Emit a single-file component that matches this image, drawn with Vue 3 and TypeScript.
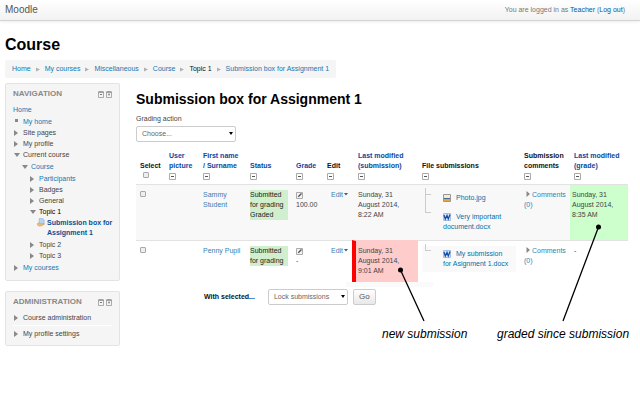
<script setup lang="ts">
import { ref } from 'vue'

interface Column {
  key: string
  lines: string[]
  width: number
  sortable?: boolean
}

const crumbs = ['Home', 'My courses', 'Miscellaneous', 'Course', 'Topic 1', 'Submission box for Assignment 1']

const columns: Column[] = [
  { key: 'select', lines: ['Select'], width: 29 },
  { key: 'picture', lines: ['User', 'picture'], width: 34, sortable: true },
  { key: 'name', lines: ['First name', '/ Surname'], width: 47, sortable: true },
  { key: 'status', lines: ['Status'], width: 46, sortable: true },
  { key: 'grade', lines: ['Grade'], width: 31, sortable: true },
  { key: 'edit', lines: ['Edit'], width: 29 },
  { key: 'modified', lines: ['Last modified', '(submission)'], width: 66, sortable: true },
  { key: 'files', lines: ['File submissions'], width: 102 },
  { key: 'comments', lines: ['Submission', 'comments'], width: 50 },
  { key: 'graded', lines: ['Last modified', '(grade)'], width: 58, sortable: true },
]

const rows = [
  {
    name: ['Sammy', 'Student'],
    status: ['Submitted', 'for grading', 'Graded'],
    grade: '100.00',
    modified: ['Sunday, 31', 'August 2014,', '8:22 AM'],
    isNew: false,
    files: [
      { kind: 'image', lines: ['Photo.jpg'] },
      { kind: 'word', lines: ['Very important', 'document.docx'] },
    ],
    graded: ['Sunday, 31', 'August 2014,', '8:35 AM'],
  },
  {
    name: ['Penny Pupil'],
    status: ['Submitted', 'for grading'],
    grade: '-',
    modified: ['Sunday, 31', 'August 2014,', '9:01 AM'],
    isNew: true,
    files: [{ kind: 'word', lines: ['My submission', 'for Asignment 1.docx'] }],
    graded: null,
  },
]

const action = ref('Choose...')
const bulk = ref('Lock submissions')
</script>

<template>
  <div class="page">
    <header class="navbar">
      <a class="brand" href="#">Moodle</a>
      <p class="login">You are logged in as <a href="#">Teacher</a> (<a href="#">Log out</a>)</p>
    </header>

    <div class="body">
      <h1>Course</h1>
      <nav class="crumbs">
        <template v-for="(c, i) in crumbs" :key="c">
          <svg v-if="i > 0" class="sep" viewBox="0 0 5 5"><path d="M0 0L5 2.5L0 5Z" /></svg>
          <span v-if="c === 'Topic 1'" class="plain">{{ c }}</span>
          <a v-else href="#">{{ c }}</a>
        </template>
      </nav>

      <div class="columns">
        <aside>
          <section class="block navigation">
            <div class="block-head">
              <h2>NAVIGATION</h2>
              <svg class="tools" viewBox="0 0 14 7"><path d="M.5 1v5.5h5V1zM8.500 1v5.500h5V1z" class="frame" /><path d="M.5 1h5M8.500 1h5" class="cap" /><path d="M2 3.500h2M11 2.500v2M10.500 3.500h1" class="mark" /></svg>
            </div>
            <a class="row" href="#">Home</a>
            <ul class="root">
              <li><a class="row dot" href="#">My home</a></li>
              <li><span class="row closed">Site pages</span></li>
              <li><span class="row closed">My profile</span></li>
              <li>
                <span class="row open">Current course</span>
                <ul>
                  <li>
                    <a class="row open" href="#">Course</a>
                    <ul>
                      <li><a class="row closed" href="#">Participants</a></li>
                      <li><span class="row closed">Badges</span></li>
                      <li><span class="row closed">General</span></li>
                      <li>
                        <span class="row open current">Topic 1</span>
                        <ul class="leaf">
                          <li>
                            <svg class="hand" viewBox="0 0 9 10"><path d="M2.500 .5h4l1.500 1.500v5h-5.500z" fill="#b9d4ec" stroke="#7fa9d4" stroke-width=".6" /><path d="M.5 6q1.500-1.200 3 0l1.500.7 2.500-.5q1.200.2.3 1l-3 1.800H2L.5 8z" fill="#eebb78" stroke="#cf9248" stroke-width=".5" /></svg>
                            <a href="#">Submission box for<br>Assignment 1</a>
                          </li>
                        </ul>
                      </li>
                      <li><span class="row closed">Topic 2</span></li>
                      <li><span class="row closed">Topic 3</span></li>
                    </ul>
                  </li>
                </ul>
              </li>
              <li><a class="row closed" href="#">My courses</a></li>
            </ul>
          </section>

          <section class="block admin">
            <div class="block-head">
              <h2>ADMINISTRATION</h2>
              <svg class="tools" viewBox="0 0 14 7"><path d="M.5 1v5.5h5V1zM8.500 1v5.500h5V1z" class="frame" /><path d="M.5 1h5M8.500 1h5" class="cap" /><path d="M2 3.500h2M11 2.500v2M10.500 3.500h1" class="mark" /></svg>
            </div>
            <ul class="root">
              <li><span class="row closed">Course administration</span></li>
              <li class="ruled"><span class="row closed">My profile settings</span></li>
            </ul>
          </section>
        </aside>

        <main>
          <h2 class="title">Submission box for Assignment 1</h2>
          <label class="caption" for="action">Grading action</label>
          <div class="picker wide">
            <select id="action" v-model="action"><option>Choose...</option></select>
            <svg viewBox="0 0 4 3"><path d="M0 0h4L2 3z" /></svg>
          </div>

          <table>
            <colgroup><col v-for="c in columns" :key="c.key" :style="{ width: c.width + 'px' }"></colgroup>
            <thead>
              <tr>
                <th v-for="c in columns" :key="c.key" :class="c.key">
                  <component :is="c.sortable ? 'a' : 'span'" :href="c.sortable ? '#' : undefined">
                    <span v-for="l in c.lines" :key="l" class="line">{{ l }}</span>
                  </component>
                  <input v-if="c.key === 'select'" type="checkbox" aria-label="Select all">
                  <svg v-else class="minus" viewBox="0 0 7 7"><path d="M.5.5h6v6h-6z" fill="#fff" stroke="#aaa" /><path d="M2 3.500h3" stroke="#555" /></svg>
                </th>
              </tr>
            </thead>
            <tbody>
              <tr v-for="r in rows" :key="r.grade">
                <td class="select"><input type="checkbox" :aria-label="'Select ' + r.name.join(' ')"></td>
                <td></td>
                <td class="name"><a href="#"><span v-for="l in r.name" :key="l" class="line">{{ l }}</span></a></td>
                <td class="status"><div class="badge"><span v-for="l in r.status" :key="l" class="line">{{ l }}</span></div></td>
                <td class="grade">
                  <a href="#" aria-label="Grade" class="pencil"><svg viewBox="0 0 7 7"><path d="M.5.5h6v6h-6z" fill="#f4f4f4" stroke="#aaa" /><path d="M1.800 5.200L2.300 3.700 5 1l1 1-2.700 2.700z" fill="#555" /></svg></a>
                  <span class="line">{{ r.grade }}</span>
                </td>
                <td class="edit"><a href="#">Edit<svg class="caret" viewBox="0 0 4 3"><path d="M0 0h4L2 2.500z" /></svg></a></td>
                <td :class="['modified', { fresh: r.isNew }]"><span v-for="l in r.modified" :key="l" class="line">{{ l }}</span></td>
                <td class="files">
                  <ul :class="['tree', { shaded: r.isNew }]">
                    <li v-for="f in r.files" :key="f.lines[0]">
                      <a href="#">
                        <svg v-if="f.kind === 'image'" class="file" viewBox="0 0 8 8"><path d="M.5.5h7v7h-7z" fill="#f4ebd0" stroke="#999" /><path d="M1 4h6v1.500H1z" fill="#4b6a92" /><path d="M1 5.500h6V7H1z" fill="#e7a63d" /></svg>
                        <svg v-else class="file" viewBox="0 0 8 8"><path d="M.5.5h7v7h-7z" fill="#dce8f8" stroke="#a8bfdf" /><path d="M1 2l1.300 4L4 2.500 5.300 6 7 1.500" fill="none" stroke="#174fa8" stroke-width="1.300" /></svg>
                        <template v-for="(l, i) in f.lines" :key="l"><br v-if="i > 0">{{ l }}</template>
                      </a>
                    </li>
                  </ul>
                </td>
                <td class="comments"><a href="#"><svg class="tri" viewBox="0 0 4 6"><path d="M.5 0L4 3L.5 6z" /></svg>Comments<br><span class="count">(0)</span></a></td>
                <td :class="['graded', { done: r.graded }]"><span v-for="l in r.graded ?? ['-']" :key="l" class="line">{{ l }}</span></td>
              </tr>
            </tbody>
          </table>

          <form class="bulk" @submit.prevent>
            <label for="bulk">With selected...</label>
            <div class="picker">
              <select id="bulk" v-model="bulk"><option>Lock submissions</option></select>
              <svg viewBox="0 0 4 3"><path d="M0 0h4L2 3z" /></svg>
            </div>
            <button type="submit">Go</button>
          </form>

          <div class="notes">
            <svg viewBox="0 0 492 266">
              <rect x="210" y="199" width="87" height="5" fill="#fafafa" />
              <path d="M264.500 187L288 238M462.500 144L427 238" />
              <circle cx="264.500" cy="187" r="2.500" /><circle cx="462.500" cy="144" r="2.500" />
            </svg>
            <p class="note-new">new submission</p>
            <p class="note-graded">graded since submission</p>
          </div>
        </main>
      </div>
    </div>
  </div>
</template>

<style>
body {
  margin: 0;
  background: #fff;
}
</style>

<style scoped>
.page {
  font: 7px/10px "Liberation Sans", Arial, sans-serif;
  color: #444;
}
h1, h2, p, ul {
  margin: 0;
  padding: 0;
}
ul {
  list-style: none;
}
a {
  color: #1478b0;
  text-decoration: none;
}
.navbar {
  display: flex;
  justify-content: space-between;
  align-items: center;
  height: 20px;
  padding: 0 15px 0 5px;
  border-bottom: 1px solid #d4d4d4;
  background: linear-gradient(#fff, #f2f2f2);
  box-shadow: 0 1px 3px rgba(0, 0, 0, 0.08);
}
.brand {
  font-size: 10px;
  color: #555;
}
.login {
  color: #777;
}
.login a {
  color: #0058a8;
}
.body {
  padding: 14px 12px 0 5px;
}
h1 {
  font-size: 16px;
  line-height: 20px;
  color: #000;
}
.crumbs {
  display: flex;
  align-items: center;
  gap: 5px;
  width: fit-content;
  margin-top: 5px;
  padding: 4px 7px;
  border-radius: 2px;
  background: #f5f5f5;
}
.crumbs .plain {
  color: #111;
}
.sep {
  width: 4px;
  height: 5px;
  fill: #b0b0b0;
}
.columns {
  display: grid;
  grid-template-columns: 115px 1fr;
  gap: 16px;
  align-items: start;
  margin-top: 5px;
}
aside {
  display: grid;
  gap: 10px;
}
.block {
  padding: 5px 7px 6px;
  border: 1px solid #e3e3e3;
  border-radius: 2px;
  background: #f5f5f5;
}
.block-head {
  display: flex;
  justify-content: space-between;
  align-items: center;
  margin-bottom: 5px;
}
.block-head h2 {
  font-size: 8px;
  line-height: 10px;
  color: #888;
}
.tools {
  width: 14px;
  height: 7px;
  fill: none;
}
.frame {
  stroke: #aaa;
}
.cap {
  stroke: #777;
}
.mark {
  stroke: #777;
}
.row {
  display: flex;
  align-items: center;
  height: 11px;
}
.navigation ul {
  margin: 1px 0;
}
ul ul {
  padding-left: 8px;
}
.root .row::before {
  content: "";
  box-sizing: border-box;
  width: 6px;
  margin: 0 3px 0 1px;
}
.root .closed::before {
  height: 6px;
  border-left: 4px solid #888;
  border-top: 3px solid transparent;
  border-bottom: 3px solid transparent;
}
.root .open::before {
  height: 4px;
  border-top: 4px solid #888;
  border-left: 3px solid transparent;
  border-right: 3px solid transparent;
}
.root .dot::before {
  width: 3px;
  height: 3px;
  margin: 0 5px 2px 2px;
  background: #888;
}
.current {
  color: #000;
}
.leaf li {
  display: flex;
  gap: 2px;
  font-weight: bold;
  white-space: nowrap;
}
.leaf a {
  color: #0a4f95;
}
.hand {
  flex: none;
  width: 8px;
  height: 9px;
}
.admin .root {
  display: grid;
  gap: 2px;
}
.admin .ruled {
  padding-top: 2px;
  border-top: 1px solid #fff;
}
main {
  position: relative;
}
.title {
  padding-top: 7px;
  font-size: 14px;
  line-height: 18px;
  color: #000;
}
.caption {
  display: block;
  margin-top: 6px;
}
.picker {
  position: relative;
  width: 80px;
}
.picker.wide {
  width: 100px;
  margin-top: 2px;
}
.picker select {
  display: block;
  box-sizing: border-box;
  width: 100%;
  height: 16px;
  padding: 0 5px;
  appearance: none;
  border: 1px solid #ccc;
  border-radius: 2px;
  background: #fff;
  font: inherit;
  color: #666;
}
.picker svg {
  position: absolute;
  right: 3px;
  top: 6px;
  width: 4px;
  height: 3px;
}
table {
  width: 100%;
  margin-top: 9px;
  table-layout: fixed;
  border-collapse: separate;
  border-spacing: 0;
}
th {
  padding: 0 4px 4px;
  vertical-align: bottom;
  text-align: left;
  color: #111;
  white-space: nowrap;
}
th a {
  color: #0a47a0;
}
td {
  padding: 5px 4px 4px;
  border-top: 1px solid #e2e2e2;
  vertical-align: top;
  white-space: nowrap;
}
tbody tr:first-child td {
  height: 46px;
  background: #f8f8f8;
}
tbody tr:last-child td {
  height: 32px;
}
td a {
  color: #3a7eb0;
}
.line {
  display: block;
}
.minus {
  display: block;
  width: 7px;
  height: 7px;
  margin-top: 2px;
}
input {
  display: block;
  box-sizing: border-box;
  width: 6px;
  height: 6px;
  margin: 1px 0 0;
  appearance: none;
  border: 1px solid #aaa;
  border-radius: 1px;
  background: #eee;
}
th input {
  margin: 1px 0 2px 3px;
}
.status {
  color: #222;
}
.badge {
  background: #cfefcf;
}
.pencil {
  display: block;
  height: 10px;
}
.pencil svg {
  display: block;
  width: 7px;
  height: 7px;
  padding-top: 2px;
}
td.edit {
  padding-left: 8px;
}
.caret {
  width: 4px;
  height: 3px;
  margin: 0 0 1px 1px;
  fill: #555;
}
.modified {
  padding-left: 6px;
}
td.fresh {
  padding-left: 2px;
  border-left: 4px solid #f00;
  border-top-color: #fcc;
  background: #fcc;
}
td.done,
tbody tr:first-child td.done {
  padding-left: 2px;
  background: #cfc;
}
.tree {
  display: grid;
  gap: 9px;
  padding: 3px 0 3px 3px;
}
.tree li {
  position: relative;
  padding-left: 18px;
}
.tree li::before {
  content: "";
  position: absolute;
  left: 0;
  top: -5px;
  width: 5px;
  height: 6px;
  border-left: 1px solid #ccc;
  border-bottom: 1px solid #ccc;
}
.tree li + li::before {
  top: -18px;
  height: 18px;
}
.tree a {
  color: #0070a8;
}
.shaded {
  background: #f9f9f9;
}
.file {
  width: 8px;
  height: 8px;
  margin-right: 5px;
  vertical-align: -2px;
}
.tri {
  width: 4px;
  height: 6px;
  margin: 0 2px;
  fill: #888;
}
.bulk {
  display: flex;
  align-items: center;
  margin-top: 7px;
  padding-left: 68px;
}
.bulk label {
  margin-right: 13px;
  font-weight: bold;
  color: #111;
}
.bulk button {
  height: 16px;
  margin-left: 5px;
  padding: 0 5px;
  border: 1px solid #ccc;
  border-radius: 2px;
  background: linear-gradient(#fff, #e8e8e8);
  font: inherit;
  font-size: 8px;
  color: #555;
}
.notes {
  position: absolute;
  left: 0;
  top: 0;
  width: 492px;
  height: 266px;
  pointer-events: none;
  font-size: 12px;
  font-style: italic;
  line-height: 16px;
  color: #000;
}
.notes svg {
  position: absolute;
  width: 100%;
  height: 100%;
}
.notes path {
  fill: none;
  stroke: #000;
  stroke-width: 1.3;
}
.notes p {
  position: absolute;
  top: 243px;
  white-space: nowrap;
}
.note-new {
  left: 246px;
}
.note-graded {
  left: 361px;
}
</style>
